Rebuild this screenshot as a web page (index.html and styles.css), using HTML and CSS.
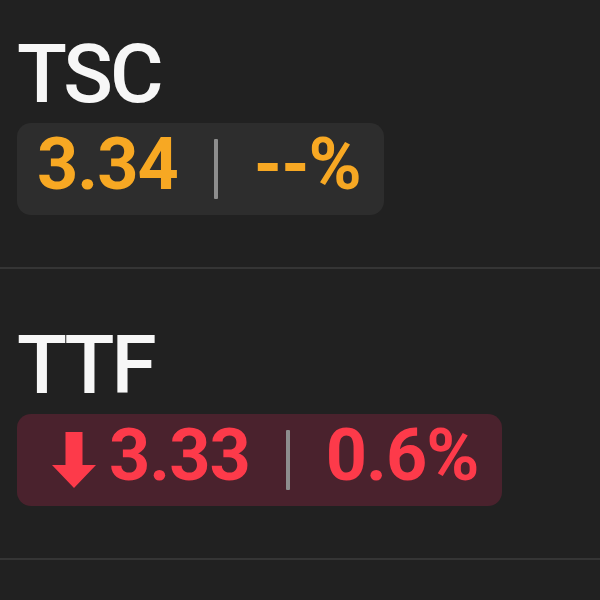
FILE: index.html
```html
<!DOCTYPE html>
<html>
<head>
<meta charset="utf-8">
<link rel="stylesheet" href="styles.css">
</head>
<body>
<div class="list">
  <div class="row">
    <div class="sym">TSC</div>
    <div class="badge neutral">
      <span class="val">3.34</span>
      <span class="sep"></span>
      <span class="val">--%</span>
    </div>
  </div>
  <div class="row">
    <div class="sym">TTF</div>
    <div class="badge down">
      <svg class="arrow" width="44" height="56" viewBox="0 0 44 56"><path d="M13.5 0H30.5V33H44L22 56L0 33H13.5Z" fill="#fd3a4a"/></svg>
      <span class="val">3.33</span>
      <span class="sep"></span>
      <span class="val">0.6%</span>
    </div>
  </div>
</div>
</body>
</html>
```

FILE: styles.css
```css
html, body {
  margin: 0;
  padding: 0;
  background: #212121;
}
body {
  width: 600px;
  height: 600px;
  overflow: hidden;
  font-family: Roboto, "Noto Sans", sans-serif;
}
.row {
  padding: 54px 0 52px 17px;
  border-bottom: 2px solid #353535;
  display: flex;
  flex-direction: column;
  align-items: flex-start;
}
.row:first-child {
  padding-top: 32px;
}
.sym {
  color: #f7f7f7;
  font-size: 82px;
  font-weight: 500;
  line-height: 84px;
  letter-spacing: -3px;
  margin-bottom: 7px;
}
.badge {
  display: flex;
  align-items: flex-start;
  height: 92px;
  box-sizing: border-box;
  padding: 6px 23px 0 20px;
  border-radius: 14px;
}
.neutral {
  background: #2d2d2d;
  color: #f7a823;
}
.down {
  background: #4a222d;
  color: #fd3a4a;
}
.val {
  font-size: 72px;
  font-weight: 700;
  line-height: 72px;
  letter-spacing: -1px;
}
.sep {
  width: 4px;
  height: 60px;
  margin: 10px 36px 0 36px;
  background: #8d8d8d;
  border-radius: 1px;
}
.arrow {
  margin: 12px 13px 0 15px;
  flex: none;
}
```
